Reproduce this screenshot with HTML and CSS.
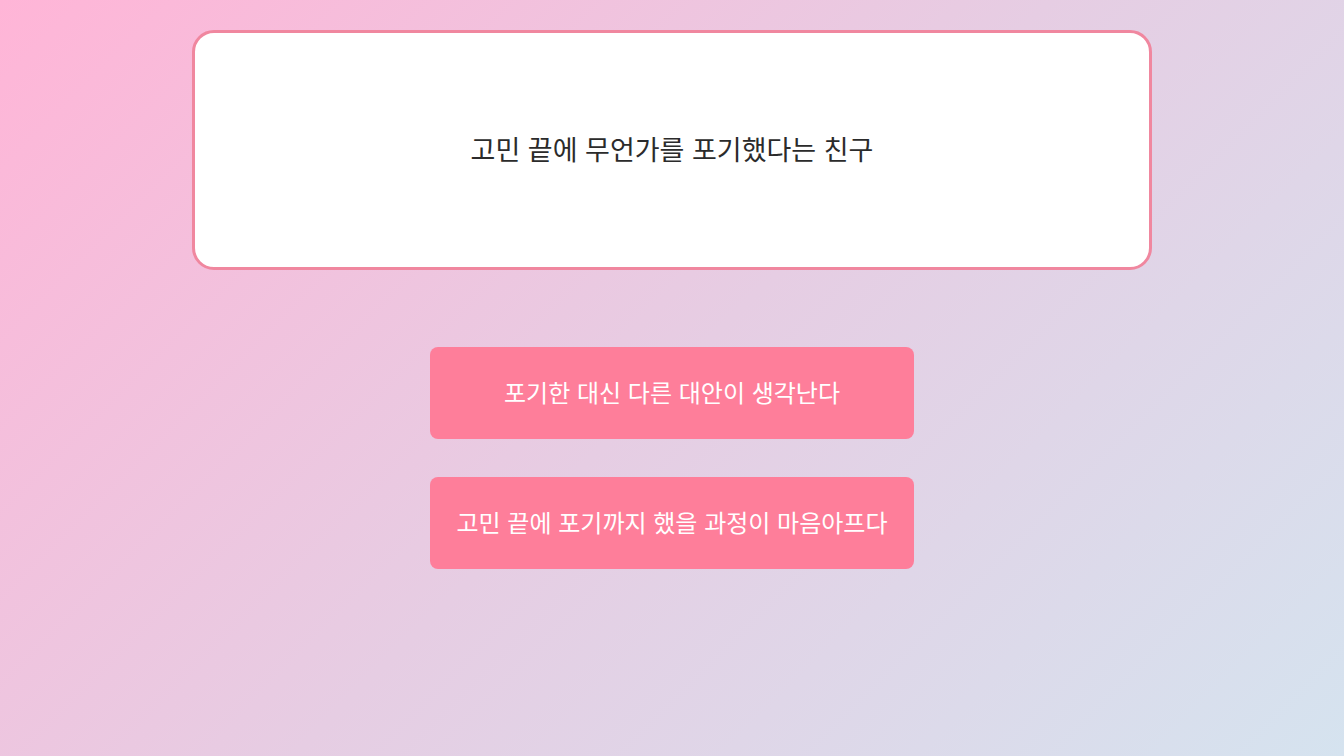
FILE: index.html
```html
<!DOCTYPE html>
<html lang="ko">
<head>
<meta charset="utf-8">
<title>마음 읽기</title>
<link rel="stylesheet" href="styles.css">
</head>
<body>
<main class="quiz">
  <section class="situation">
    <p class="situation-text">고민 끝에 무언가를 포기했다는 친구</p>
  </section>
  <div class="choices">
    <button class="choice" type="button">포기한 대신 다른 대안이 생각난다</button>
    <button class="choice" type="button">고민 끝에 포기까지 했을 과정이 마음아프다</button>
  </div>
</main>
</body>
</html>
```

FILE: styles.css
```css
html, body {
  margin: 0;
  height: 100%;
}

body {
  background: linear-gradient(135deg, #ffb5d7 0%, #e6cde3 50%, #d5e3ef 100%);
  font-family: "Noto Sans CJK KR", "Noto Sans", sans-serif;
  overflow: hidden;
}

.quiz {
  display: flex;
  flex-direction: column;
  align-items: center;
  padding-top: 30px;
}

.situation {
  box-sizing: border-box;
  width: 960px;
  height: 240px;
  background: #ffffff;
  border: 3px solid #f0879f;
  border-radius: 22px;
  display: flex;
  align-items: center;
  justify-content: center;
}

.situation-text {
  margin: 0 0 4px;
  font-size: 27px;
  color: #2b2b2b;
}

.choices {
  display: flex;
  flex-direction: column;
  gap: 38px;
  margin-top: 77px;
}

.choice {
  width: 484px;
  height: 92px;
  padding: 0 0 4px;
  border: none;
  border-radius: 8px;
  background: #fe7e9a;
  color: #ffffff;
  font-family: inherit;
  font-size: 24px;
  cursor: pointer;
}
```
